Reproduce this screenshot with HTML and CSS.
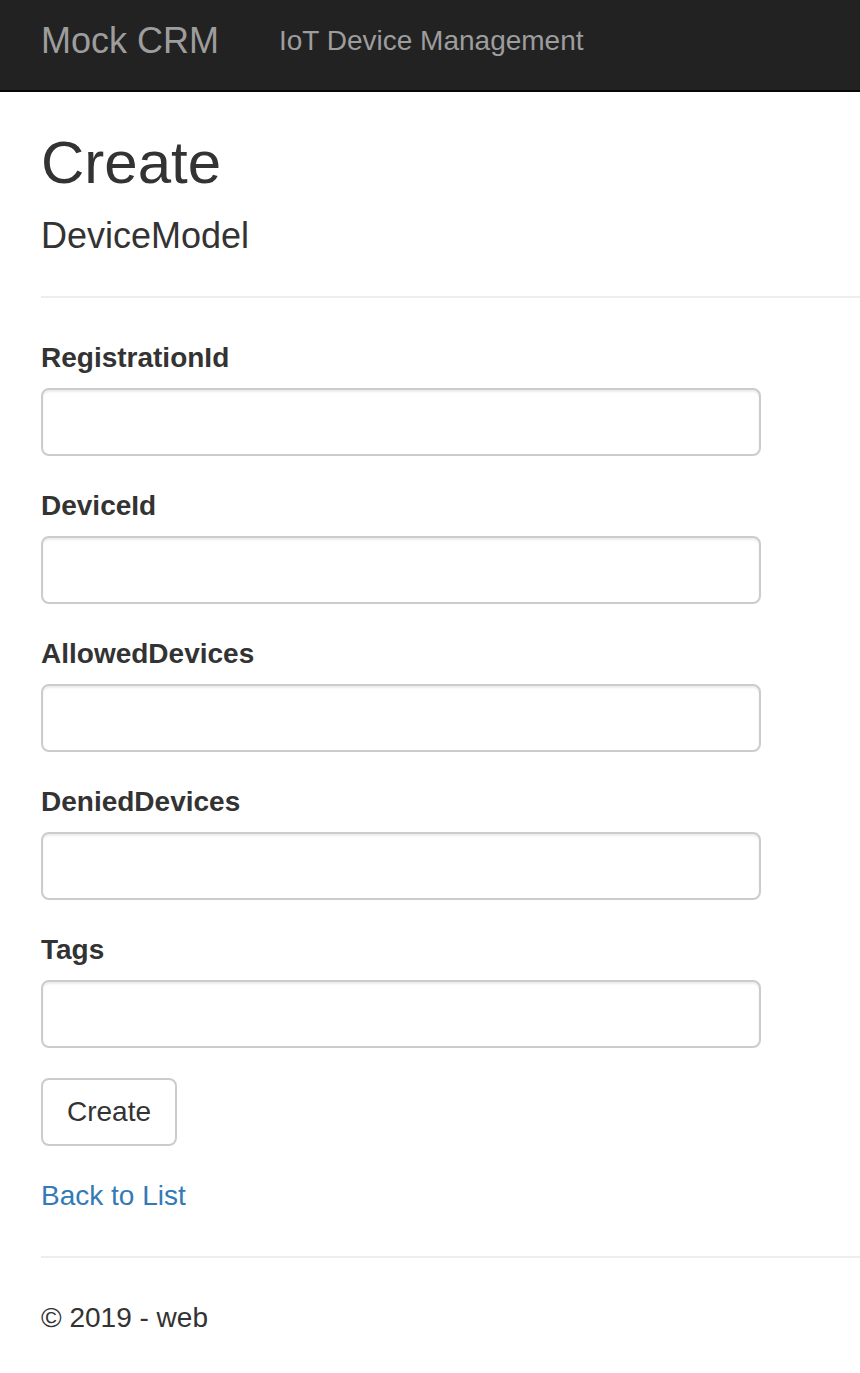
FILE: index.html
```html
<!DOCTYPE html>
<html lang="en">
<head>
<meta charset="utf-8">
<title>Create - Mock CRM</title>
<link rel="stylesheet" href="styles.css">
</head>
<body>
<nav class="navbar">
  <a class="brand" href="#">Mock CRM</a>
  <a class="nav-link" href="#">IoT Device Management</a>
</nav>
<main class="body-content">
  <h2 class="page-title">Create</h2>
  <h4 class="subtitle">DeviceModel</h4>
  <hr class="rule">
  <form class="form">
    <div class="form-group">
      <label class="control-label" for="RegistrationId">RegistrationId</label>
      <input class="form-control" id="RegistrationId" type="text">
    </div>
    <div class="form-group">
      <label class="control-label" for="DeviceId">DeviceId</label>
      <input class="form-control" id="DeviceId" type="text">
    </div>
    <div class="form-group">
      <label class="control-label" for="AllowedDevices">AllowedDevices</label>
      <input class="form-control" id="AllowedDevices" type="text">
    </div>
    <div class="form-group">
      <label class="control-label" for="DeniedDevices">DeniedDevices</label>
      <input class="form-control" id="DeniedDevices" type="text">
    </div>
    <div class="form-group">
      <label class="control-label" for="Tags">Tags</label>
      <input class="form-control" id="Tags" type="text">
    </div>
    <div class="form-group">
      <button class="btn" type="button">Create</button>
    </div>
  </form>
  <div class="back">
    <a class="link" href="#">Back to List</a>
  </div>
  <hr class="rule footer-rule">
  <footer class="footer">
    <p class="copy">&copy; 2019 - web</p>
  </footer>
</main>
</body>
</html>
```
FILE: styles.css
```css
* {
  box-sizing: border-box;
}
html, body {
  margin: 0;
  padding: 0;
  background: #fff;
}
body {
  font-family: "Liberation Sans", Arial, Helvetica, sans-serif;
  font-size: 28px;
  line-height: 40px;
  color: #333;
}
.navbar {
  display: flex;
  align-items: flex-start;
  height: 92px;
  padding-top: 21px;
  padding-left: 11px;
  background: #222;
  border-bottom: 2px solid #080808;
}
.brand {
  font-size: 36px;
  line-height: 40px;
  padding: 0 30px;
  color: #9d9d9d;
  text-decoration: none;
}
.nav-link {
  font-size: 28px;
  line-height: 40px;
  padding: 0 30px;
  color: #9d9d9d;
  text-decoration: none;
}
.body-content {
  padding: 0 0 0 41px;
}
.page-title {
  margin: 38px 0 20px;
  font-size: 60px;
  font-weight: 500;
  line-height: 66px;
}
.subtitle {
  margin: 20px 0 20px;
  font-size: 36px;
  font-weight: 500;
  line-height: 39.6px;
}
.rule {
  margin: 40px 0;
  border: 0;
  border-top: 2px solid #eee;
  height: 0;
}
.form {
  margin: 0;
}
.form-group {
  margin-bottom: 30px;
}
.control-label {
  display: block;
  margin-bottom: 10px;
  font-weight: bold;
  line-height: 40px;
}
.form-control {
  display: block;
  width: 720px;
  height: 68px;
  padding: 12px 24px;
  font-family: inherit;
  font-size: 28px;
  color: #555;
  background: #fff;
  border: 2px solid #ccc;
  border-radius: 8px;
  box-shadow: inset 0 2px 2px rgba(0, 0, 0, 0.075);
  outline: none;
}
.btn {
  display: inline-block;
  height: 68px;
  padding: 0 24px;
  font-family: inherit;
  font-size: 28px;
  line-height: 40px;
  color: #333;
  background: #fff;
  border: 2px solid #ccc;
  border-radius: 8px;
  cursor: pointer;
}
.back {
  line-height: 40px;
}
.link {
  color: #337ab7;
  text-decoration: none;
}
.copy {
  margin: 0;
}
```
